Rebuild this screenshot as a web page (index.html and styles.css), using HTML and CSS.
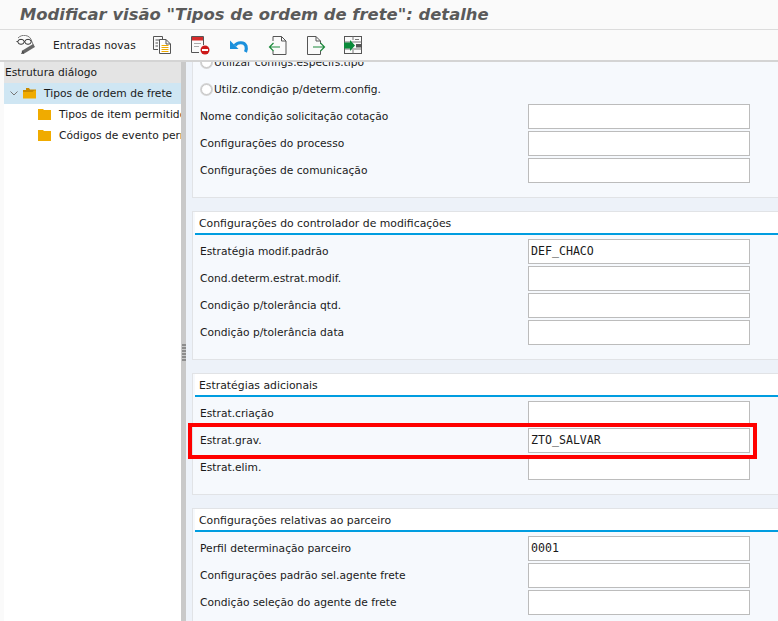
FILE: index.html
```html
<!DOCTYPE html>
<html lang="pt">
<head>
  <meta charset="UTF-8">
  <title>Modificar visão</title>
  <link rel="stylesheet" href="styles.css">
</head>
<body>
<header class="title-bar">
  <h1>Modificar visão "Tipos de ordem de frete": detalhe</h1>
</header>

<div class="toolbar">
  <svg class="tool tool-glasses" width="20" height="20" viewBox="0 0 20 20" fill="none">
    <path d="M3 3C5 .8 8 0 10.5.5C14 1 16 3 17 7L19 11.5" stroke="#777"/>
    <ellipse cx="6" cy="6.8" rx="3.2" ry="2.5" stroke="#333"/>
    <ellipse cx="13" cy="6.8" rx="3.2" ry="2.5" stroke="#333"/>
    <path d="M9.2 6.5H9.8M2.8 6.5H1.5" stroke="#333"/>
    <path d="M7.5 17.5L19 10.5" stroke="#666" stroke-width="3.6"/>
    <path d="M7.8 15.5L9 18.5L6 19Z" fill="#444"/>
  </svg>
  <span class="tool-text">Entradas novas</span>
  <svg class="tool tool-copy" width="19" height="18" viewBox="0 0 19 18" fill="none">
    <path d="M.5.5H9.5V3M.5.5V13.5H5" stroke="#555"/>
    <path d="M2.5 4H7M2.5 7H5M2.5 10H5" stroke="#555"/>
    <path d="M6.5 3.5H13L17.5 8V17.5H6.5Z" fill="#fff" stroke="#555"/>
    <path d="M13 3.5V8H17.5" stroke="#555"/>
    <path d="M8.5 9.5H15.5M8.5 11.5H15.5M8.5 13.5H15.5M8.5 15.5H15.5" stroke="#f0ab00"/>
  </svg>
  <svg class="tool tool-delete" width="19" height="19" viewBox="0 0 19 19" fill="none">
    <path d="M8 16.5H.5V.5H12.5V9" stroke="#555"/>
    <rect x="1" y="1" width="11" height="3.5" fill="#d62a2a"/>
    <path d="M3 7.5H10M3 10.5H8" stroke="#aaa"/>
    <circle cx="14" cy="14" r="4.5" fill="#cc1919"/>
    <rect x="11" y="13" width="6" height="2" fill="#fff"/>
  </svg>
  <svg class="tool tool-undo" width="20" height="17" viewBox="0 0 20 17" fill="none">
    <path d="M6 8.5C8 5.5 15 4 17 9C17.6 11 17.4 13 16.5 15" stroke="#1b90dc" stroke-width="3.2"/>
    <path d="M1 3.5V12H9.5Z" fill="#1b90dc"/>
  </svg>
  <svg class="tool tool-prev" width="19" height="19" viewBox="0 0 19 19" fill="none">
    <path d="M5 5V.5H13.5L18 5V18.5H5V15" stroke="#555"/>
    <path d="M13.5.5V5H18" stroke="#555"/>
    <path d="M12 11H1.5M5.5 7L1.5 11L5.5 15" stroke="#1d8a3c" stroke-width="1.2" fill="#fff"/>
  </svg>
  <svg class="tool tool-next" width="19" height="19" viewBox="0 0 19 19" fill="none">
    <path d="M.5 18.5V.5H9L13.5 5V8M13.5 14.5V18.5H.5" stroke="#555"/>
    <path d="M9 .5V5H13.5" stroke="#555"/>
    <path d="M6 11H17.5M13.5 7L17.5 11L13.5 15" stroke="#1d8a3c" stroke-width="1.2"/>
  </svg>
  <svg class="tool tool-move" width="19" height="19" viewBox="0 0 19 19" fill="none">
    <rect x=".5" y=".5" width="17" height="17" stroke="#555"/>
    <path d="M.5 6H17.5M.5 13H17.5M9 .5V4M9 14V17.5" stroke="#777"/>
    <path d="M11 3.5H15" stroke="#777"/>
    <path d="M0 6.5H6V4L11 9.5L6 15V12.5H0Z" fill="#0a8a3a"/>
    <rect x="12" y="8" width="5.5" height="3.5" fill="#555"/>
  </svg>
</div>

<div class="workspace">
  <aside class="tree">
    <div class="tree-head">Estrutura diálogo</div>
    <div class="tree-row tree-row-selected">
      <svg class="tree-arrow" width="8" height="5" viewBox="0 0 8 5" fill="none"><path d="M.5.5L4 4L7.5.5" stroke="#777"/></svg>
      <svg class="folder" width="13" height="11" viewBox="0 0 13 11">
        <path d="M3 0H6L7 1.5H13V10H0V2H3Z" fill="#c98a00"/>
        <path d="M0 4H9.5L11 2.5H13V10.5H0Z" fill="#f0ab00"/>
      </svg>
      <span>Tipos de ordem de frete</span>
    </div>
    <div class="tree-row tree-child">
      <svg class="folder" width="13" height="11" viewBox="0 0 13 11"><path d="M0 0H5L6 1H13V11H0Z" fill="#f0ab00"/></svg>
      <span>Tipos de item permitidos</span>
    </div>
    <div class="tree-row tree-child">
      <svg class="folder" width="13" height="11" viewBox="0 0 13 11"><path d="M0 0H5L6 1H13V11H0Z" fill="#f0ab00"/></svg>
      <span>Códigos de evento permitidos</span>
    </div>
  </aside>

  <div class="splitter"><div class="grip"></div></div>

  <main class="details">
    <section class="group group-first">
      <div class="row"><span class="radio"></span><label>Utilizar configs.especifs.tipo</label></div>
      <div class="row"><span class="radio"></span><label>Utilz.condição p/determ.config.</label></div>
      <div class="row"><label>Nome condição solicitação cotação</label><div class="field"></div></div>
      <div class="row"><label>Configurações do processo</label><div class="field"></div></div>
      <div class="row"><label>Configurações de comunicação</label><div class="field"></div></div>
    </section>

    <section class="group">
      <h2>Configurações do controlador de modificações</h2>
      <div class="row"><label>Estratégia modif.padrão</label><div class="field">DEF_CHACO</div></div>
      <div class="row"><label>Cond.determ.estrat.modif.</label><div class="field"></div></div>
      <div class="row"><label>Condição p/tolerância qtd.</label><div class="field"></div></div>
      <div class="row"><label>Condição p/tolerância data</label><div class="field"></div></div>
    </section>

    <section class="group">
      <h2>Estratégias adicionais</h2>
      <div class="row"><label>Estrat.criação</label><div class="field"></div></div>
      <div class="row row-marked"><label>Estrat.grav.</label><div class="field">ZTO_SALVAR</div><div class="red-box"></div></div>
      <div class="row"><label>Estrat.elim.</label><div class="field"></div></div>
    </section>

    <section class="group">
      <h2>Configurações relativas ao parceiro</h2>
      <div class="row"><label>Perfil determinação parceiro</label><div class="field">0001</div></div>
      <div class="row"><label>Configurações padrão sel.agente frete</label><div class="field"></div></div>
      <div class="row"><label>Condição seleção do agente de frete</label><div class="field"></div></div>
    </section>
  </main>
</div>
</body>
</html>
```

FILE: styles.css
```css
html, body {
  height: 100%;
}
body {
  margin: 0;
  overflow: hidden;
  display: flex;
  flex-direction: column;
  background: #fafafa;
  color: #1a1a1a;
  font-family: "DejaVu Sans", sans-serif;
  font-size: 10.7px;
}

/* Titel */
.title-bar {
  height: 30px;
  flex: none;
  padding-left: 20px;
  background: #fafafa;
  border-bottom: 1px solid #dcdcdc;
  box-sizing: border-box;
}
.title-bar h1 {
  margin: 0;
  font-size: 16.4px;
  line-height: 30px;
  font-weight: bold;
  font-style: italic;
  color: #5a5a5a;
  white-space: nowrap;
}

/* Toolbar */
.toolbar {
  height: 32px;
  flex: none;
  box-sizing: border-box;
  display: flex;
  align-items: center;
  background: #fafafa;
  border-bottom: 2px solid #d4d4d4;
}
.tool {
  flex: none;
}
.tool-glasses { margin-left: 15px; }
.tool-text { margin-left: 18px; width: 83px; white-space: nowrap; color: #222; }
.tool-copy { margin-left: 17px; }
.tool-delete { margin-left: 19px; }
.tool-undo { margin-left: 19px; }
.tool-prev { margin-left: 19px; }
.tool-next { margin-left: 20px; }
.tool-move { margin-left: 18px; }

.workspace {
  flex: 1;
  min-height: 0;
  display: flex;
}

/* Baum links */
.tree {
  width: 177px;
  flex: none;
  margin-left: 4px;
  background: #fff;
  overflow: hidden;
}
.tree-head {
  height: 21px;
  line-height: 21px;
  padding-left: 1px;
  background: #e4e4e4;
}
.tree-row {
  height: 21px;
  display: flex;
  align-items: center;
  white-space: nowrap;
}
.tree-row-selected {
  background: #cfe6f3;
}
.tree-arrow {
  flex: none;
  margin-left: 6px;
  margin-right: 5px;
}
.folder {
  flex: none;
  margin-right: 8px;
}
.tree-child {
  padding-left: 34px;
}

.splitter {
  width: 5px;
  flex: none;
  background: #c9c9c9;
  position: relative;
}
.grip {
  position: absolute;
  left: 1px;
  top: 282px;
  width: 4px;
  height: 18px;
  background: repeating-linear-gradient(to bottom, #8d8d8d 0 2px, #c9c9c9 2px 3px);
}

/* Detailbereich */
.details {
  flex: 1;
  min-width: 0;
  overflow: hidden;
  background: #edf2f9;
  padding-left: 6px;
}
.group {
  margin: 0 -8px 13px 0;
  background: #f6f9fd;
  border: 1px solid #e1e3e6;
  padding: 0 0 12px 0;
}
.group-first {
  margin-top: -13px;
}
.group h2 {
  margin: 0 0 4px 2px;
  height: 21px;
  line-height: 23px;
  padding-left: 4px;
  font-size: 10.85px;
  font-weight: normal;
  color: #1a1a1a;
  background: #fff;
  border-bottom: 2px solid #009de0;
}
.row {
  height: 25px;
  margin-bottom: 2px;
  padding-left: 7px;
  display: flex;
  align-items: center;
  position: relative;
}
.row label {
  white-space: nowrap;
}
.radio {
  width: 9px;
  height: 9px;
  margin-left: 1px;
  margin-right: 2px;
  flex: none;
  background: #fff;
  border: 1px solid #c8c8c8;
  box-shadow: 0 0 0 1px #d4d4d4;
  border-radius: 50%;
}
.field {
  position: absolute;
  left: 335px;
  top: 0;
  width: 222px;
  height: 25px;
  box-sizing: border-box;
  background: #fff;
  border: 1px solid #bcbcbc;
  padding-left: 2px;
  line-height: 23px;
  font-family: "DejaVu Sans Mono", monospace;
  font-size: 11.6px;
}
.red-box {
  position: absolute;
  left: -5px;
  top: -5px;
  width: 569px;
  height: 36px;
  box-sizing: border-box;
  border: 4px solid #ff0000;
  z-index: 1;
}
```
